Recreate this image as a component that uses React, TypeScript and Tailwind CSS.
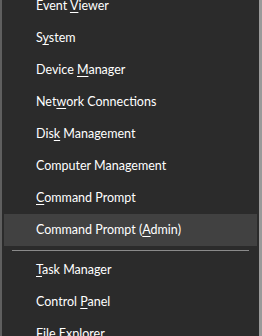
import React from 'react';

type Item = { pre: string; key: string; post: string; active?: boolean };

const groupA: Item[] = [
  { pre: 'Event ', key: 'V', post: 'iewer' },
  { pre: 'S', key: 'y', post: 'stem' },
  { pre: 'Device ', key: 'M', post: 'anager' },
  { pre: 'Net', key: 'w', post: 'ork Connections' },
  { pre: 'Dis', key: 'k', post: ' Management' },
  { pre: 'Computer Management', key: '', post: '' },
  { pre: '', key: 'C', post: 'ommand Prompt' },
  { pre: 'Command Prompt (', key: 'A', post: 'dmin)', active: true },
];

const groupB: Item[] = [
  { pre: '', key: 'T', post: 'ask Manager' },
  { pre: 'Control ', key: 'P', post: 'anel' },
  { pre: 'File Ex', key: 'p', post: 'lorer' },
];

function Row({ item }: { item: Item }) {
  return (
    <div className={`h-8 shrink-0 flex items-center pl-8 mx-[2px] ${item.active ? 'bg-[#414141]' : ''}`}>
      <span className="text-[12.5px] text-white leading-none">
        {item.pre}
        {item.key && <u className="underline-offset-2">{item.key}</u>}
        {item.post}
      </span>
    </div>
  );
}

export default function App() {
  return (
    <div className="w-[262px] h-[336px] overflow-hidden bg-[#2b2b2b] flex font-['Lato',sans-serif]">
      <div className="w-[2px] bg-[#5f5f5f] shrink-0" />
      <div className="flex-1 flex flex-col -mt-[10px]">
        {groupA.map((it, i) => (
          <Row key={i} item={it} />
        ))}
        <div className="h-2 shrink-0 flex items-center px-[10px]">
          <div className="h-px w-full bg-[#8a8a8a]" />
        </div>
        {groupB.map((it, i) => (
          <Row key={i} item={it} />
        ))}
      </div>
      <div className="w-[3px] bg-[#9a9a9a] shrink-0" />
    </div>
  );
}
